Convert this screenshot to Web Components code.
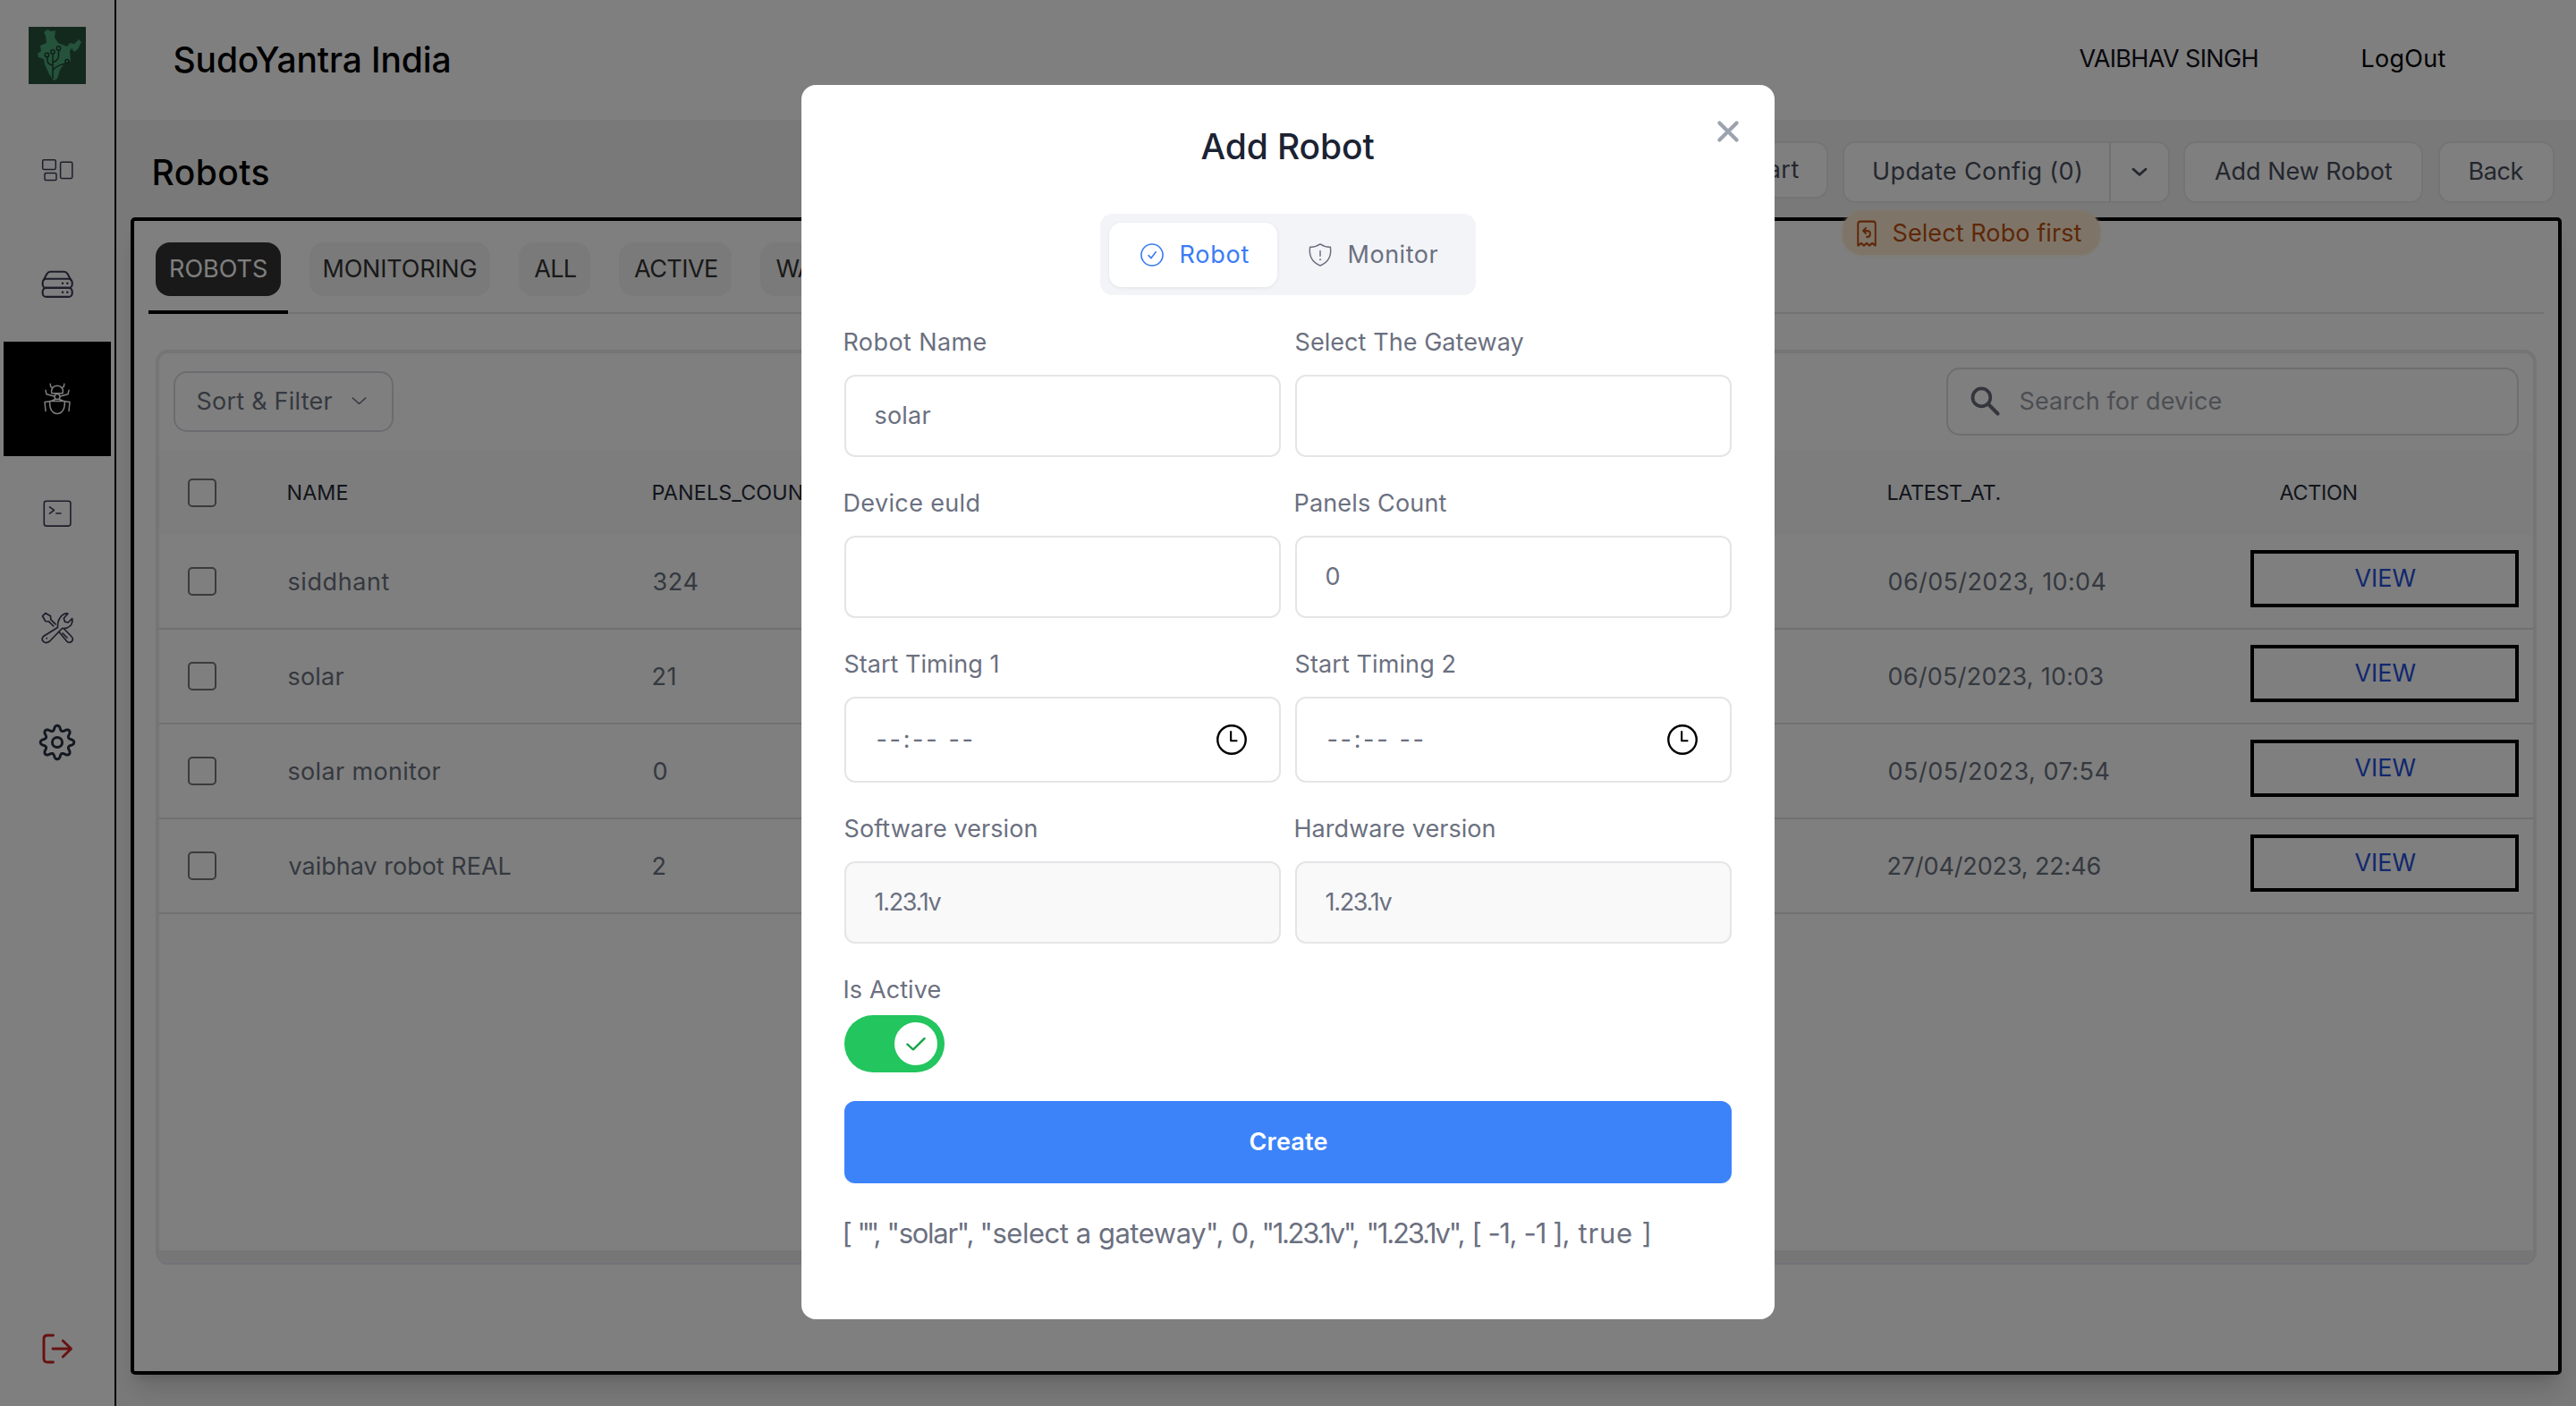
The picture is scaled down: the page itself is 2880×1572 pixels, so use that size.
<!DOCTYPE html>
<html lang="en">
<head>
<meta charset="utf-8">
<title>SudoYantra India</title>
<style>
html,body{margin:0;padding:0;height:100%;overflow:hidden}
body{font-family:Inter,"Liberation Sans",sans-serif;background:#f3f3f3;color:#6b7280}
</style>
</head>
<body>
<robot-console></robot-console>
<script>
const define=(name,html,setup)=>customElements.define(name,class extends HTMLElement{
  connectedCallback(){
    if(this.shadowRoot)return;
    const root=this.attachShadow({mode:'open'});
    root.innerHTML='<style>*{box-sizing:border-box}</style>'+(typeof html==='function'?html(this):html);
    if(setup)setup(this,root);
  }
});

/* Text set to a given ink width: s = font size, w = width, wt = weight */
const ctx=document.createElement('canvas').getContext('2d');
define('fit-text',el=>{
  const s=+(el.getAttribute('s')||27),w=+el.getAttribute('w'),wt=el.getAttribute('wt')||400,t=el.textContent;
  ctx.font=`${wt} ${s}px Inter`;
  const m=ctx.measureText(t),ink=m.actualBoundingBoxLeft+m.actualBoundingBoxRight;
  const ls=t.length>1?(w-ink)/(t.length-1):0,lh=Math.ceil(s*1.25);
  return `<style>:host{display:block;flex:none;width:${w}px;height:${lh}px;line-height:${lh}px;font-size:${s}px;font-weight:${wt};white-space:pre}
  span{display:inline-block;margin-left:${m.actualBoundingBoxLeft+.5}px;letter-spacing:${ls}px}</style><span><slot></slot></span>`;
});

/* Line icons on a 40 unit grid */
const gear=(()=>{let d='';for(let i=0;i<=160;i++){const a=i/160*2*Math.PI,c=Math.cos(8*a),r=15.4+2.5*Math.sign(c)*Math.pow(Math.abs(c),.75);d+=(i?'L':'M')+(20+r*Math.sin(a)).toFixed(2)+' '+(20-r*Math.cos(a)).toFixed(2)}return d+'Z'})();
const icons={
  grid:'<g stroke-width="1.5"><rect x="3.7" y="8.8" width="14.6" height="10.6" rx="1.4"/><rect x="6" y="23.6" width="13" height="8" rx="1.4"/><rect x="23.6" y="11.2" width="13.2" height="18.3" rx="1.4"/></g>',
  server:'<g stroke-width="2.1"><path d="M4.5 15.5L8.4 8.2Q9.8 5.8 12.5 5.8H27.5Q30.2 5.8 31.6 8.2L35.5 15.5"/><rect x="3.7" y="13.8" width="33" height="10.1" rx="4"/><rect x="3.7" y="23.9" width="33" height="10" rx="4"/></g><g fill="currentColor" stroke="none"><circle cx="26" cy="18.8" r="1.3"/><circle cx="31.3" cy="18.8" r="1.3"/><circle cx="26" cy="28.8" r="1.3"/><circle cx="31.3" cy="28.8" r="1.3"/></g>',
  bug:'<g stroke-width="1.5"><path d="M14 13.8C12.5 9 15.5 5.3 20 5.3S27.5 9 26 13.8ZM12.2 3.3L12.7 6.3 15 7.7M27.8 3.3L27.3 6.3 25 7.7M7 10.3L8 14.8 16.5 17M33 10.3L32 14.8 23.5 17M17.5 20.5L13 22.5 6 23.5 7 33.5M22.5 20.5L27 22.5 34 23.5 33 33.5M11.8 22.5H28.2C29 31 25.5 36.5 20 36.5S11 31 11.8 22.5Z"/><circle cx="20" cy="17.6" r="3"/></g>',
  term:'<g stroke-width="1.6"><rect x="5.3" y="6.3" width="29.6" height="27.8" rx="2.5"/><path d="M11.5 12.8L16.5 16.4 11.5 20.2M18.8 20H24"/></g>',
  tools:'<g stroke-width="1.7"><path d="M20.5 19.5C20 11.5 24.5 3.5 32 4L27.3 9.3 28.5 13.2 32.2 14 36.7 9.5C38 16.5 32.5 21.5 25.5 20.5L11.5 35C6 39 1 34 4.5 29.5Z"/><path d="M18 15.8L12.8 10.6 12.5 6.8 6.8 3.5 3.5 6.8 6.8 12.5 10.6 12.8 15.8 18M22 24.5L30.5 34.8C34.5 39 40 33.5 35.8 29.5L28 21.5M26 26L31 31"/></g><circle cx="8.3" cy="31.7" r=".9" fill="currentColor" stroke="none"/>',
  gear:`<path stroke-width="2.8" d="${gear}"/><circle cx="20" cy="20" r="5.3" stroke-width="2.8"/>`,
  exit:'<path stroke-width="2.9" d="M15.5 5H9Q5 5 5 9V31Q5 35 9 35H15.5M15 20H35.5M26.3 11L35.5 20 26.3 29"/>',
  down:'<path d="M6 12L20 27 34 12"/>',
  wide:'<path d="M3 4L20 33 37 4"/>',
  cross:'<path d="M4 4L36 36M36 4L4 36"/>',
  check:'<path d="M4 21L15 33 36 8"/>',
  search:'<circle cx="15" cy="15" r="12" stroke-width="4.5"/><path stroke-width="5" d="M24 24L37 37"/>',
  clock:'<circle cx="20" cy="20" r="18.5" stroke-width="2.8"/><path stroke-width="2.5" stroke-linecap="butt" d="M19 8.5V21.5H27.5"/>',
  okring:'<circle cx="20" cy="20" r="18.5" stroke-width="2.5"/><path stroke-width="2.5" d="M14 21L18.5 25.5 26.5 15"/>',
  shield:'<path stroke-width="2.3" d="M20 1.5Q28 7 37.5 6.5Q41 30 20 38.5Q-1 30 2.5 6.5Q12 7 20 1.5ZM20 13V22"/><circle cx="20" cy="28" r="1" fill="currentColor" stroke-width="1"/>',
  receipt:'<path stroke-width="3" d="M5 38V6Q5 2 9 2H31Q35 2 35 6V38L29.500 34.500 24.800 38 20 34.500 15.200 38 10.500 34.500ZM18.500 12L14 16 18.500 20M14 16H21Q26 16 26 20.500T21 25H20"/>'
};
define('line-icon',el=>`<style>:host{display:block;flex:none;width:${el.getAttribute('w')||40}px;height:${el.getAttribute('h')||el.getAttribute('w')||40}px}svg{display:block;width:100%;height:100%;overflow:visible}</style>
<svg viewBox="0 0 40 40" preserveAspectRatio="none" fill="none" stroke="currentColor" stroke-width="${el.getAttribute('sw')||2}" stroke-linecap="round" stroke-linejoin="round">${icons[el.getAttribute('n')]}</svg>`);

define('side-bar',`<style>
:host{display:flex;flex-direction:column;flex:none;width:130px;height:1572px;background:#fff;border-right:2px solid #000;color:#3b3c55;align-items:center}
.logo{width:64px;height:64px;margin:30px 0 32px;display:block}
.c{width:120px;height:128px;display:flex;align-items:center;justify-content:center}
.on{background:#000;color:#fff}.g{color:#283040}.x{margin-top:auto;color:#d02323}
</style>
<svg class="logo" viewBox="0 0 64 64"><path fill="#28523c" d="M0 0H64V64H0Z"/><path fill="#4aa574" d="M21 3L25 5 30 4 29 12 33 18 43 22 46 18 51 19 56 14 59 17 55 25 51 28 48 24 46 27 47 38 40 41 35 48 32 58 28 60 23 53 18 42 17 36 11 34 10 30 14 27 13 21 20 18 19 10 17 6Z"/><g fill="none" stroke="#1d3f31" stroke-width="1.5"><path d="M27 58V30M21 34V37Q21 42 27 43M33.5 26.5V33Q33.5 37 27 40M27 49Q29 44 41 41"/><circle cx="27" cy="28" r="2.2"/><circle cx="33.5" cy="24" r="2.2"/><circle cx="20.5" cy="31.5" r="2.2"/><circle cx="43" cy="38.5" r="2"/></g></svg>
<div class="c"><line-icon n="grid"></line-icon></div>
<div class="c"><line-icon n="server"></line-icon></div>
<div class="c on"><line-icon n="bug"></line-icon></div>
<div class="c"><line-icon n="term"></line-icon></div>
<div class="c"><line-icon n="tools"></line-icon></div>
<div class="c g"><line-icon n="gear" w="42"></line-icon></div>
<div class="c x"><line-icon n="exit"></line-icon></div>`);

define('top-bar',`<style>
:host{display:flex;height:134px;background:#fff;color:#000;align-items:center;padding:0 146px 2px 65px}
.n{margin-left:auto;margin-right:118px;color:#111019}
</style><fit-text s="39" w="307" wt="500">SudoYantra India</fit-text><fit-text class="n" w="199">VAIBHAV SINGH</fit-text><fit-text w="93">LogOut</fit-text>`);

define('action-bar',`<style>
:host{display:flex;height:109px;align-items:flex-start;padding:24px 24px 0 42px;color:#484e5c}
.h{color:#000;margin:10px auto 0 0}
.b{display:flex;height:69px;border:2px solid #e9e9ec;border-radius:14px;background:#fff;align-items:center;justify-content:center;flex:none;padding-bottom:1px}
.r{height:64px;width:158px;margin-right:16px}
.u{width:366px;margin-right:15px;position:relative}
.u .t{width:298px;display:flex;justify-content:center;align-items:center;height:65px;border-right:2px solid #e2e2e6}
.u .d{flex:1;display:flex;justify-content:center}
.badge{position:absolute;left:-2px;top:76px;width:288px;height:49px;border-radius:22px;background:#fdebd0;color:#bd4f12;display:flex;align-items:center;gap:16px;padding:0 0 0 14px;box-shadow:0 0 4px #fdebd0}
</style>
<fit-text class="h" s="39" w="128" wt="500">Robots</fit-text>
<div class="b r"><fit-text w="92">Restart</fit-text></div>
<div class="b u"><div class="t"><fit-text w="231">Update Config (0)</fit-text></div><div class="d"><line-icon n="down" w="20" h="17" sw="6"></line-icon></div>
<div class="badge"><line-icon n="receipt" w="26" h="30"></line-icon><fit-text w="211">Select Robo first</fit-text></div></div>
<div class="b" style="width:268px;margin-right:17px"><fit-text w="199">Add New Robot</fit-text></div>
<div class="b" style="width:130px"><fit-text w="60">Back</fit-text></div>`);

define('tab-strip',`<style>
:host{display:flex;height:104px;margin:0 16px;border-bottom:2px solid #e6e6e8;gap:16px;padding-top:24px}
.t{padding:0 8px;height:80px;flex:none}
.p{height:60px;border-radius:16px;background:#f5f5f5;color:#333;display:flex;align-items:center;justify-content:center}
.on{border-bottom:4px solid #000}.on .p{background:#323232;color:#fff}
</style>
<div class="t on"><div class="p" style="width:140px"><fit-text w="107">ROBOTS</fit-text></div></div>
<div class="t"><div class="p" style="width:202px"><fit-text w="170">MONITORING</fit-text></div></div>
<div class="t"><div class="p" style="width:80px"><fit-text w="46.5">ALL</fit-text></div></div>
<div class="t"><div class="p" style="width:126px"><fit-text w="93">ACTIVE</fit-text></div></div>
<div class="t"><div class="p" style="width:156px"><fit-text w="122">WARNING</fit-text></div></div>`);

define('table-tools',`<style>
:host{display:flex;height:109px;align-items:center;justify-content:space-between;padding:0 16px 2px}
.s{width:246px;height:68px;border:2px solid #d9d9e0;border-radius:15px;display:flex;align-items:center;padding-left:24px;gap:22px}
.q{width:640px;height:76px;border:2px solid #dcdce0;border-radius:15px;display:flex;align-items:center;padding-left:25px;gap:22px;color:#999ca6}
.q line-icon{color:#6a6c7a}
</style>
<div class="s"><fit-text w="151">Sort &amp; Filter</fit-text><line-icon n="wide" w="17" h="9" sw="4.5"></line-icon></div>
<div class="q"><line-icon n="search" w="33" h="33"></line-icon><fit-text w="225">Search for device</fit-text></div>`);

define('robot-row',el=>{
  const c=(k)=>el.getAttribute(k).split('|'),f=(k,s)=>{const [t,w]=c(k);return `<fit-text class="x" s="${s}" w="${w}">${t}</fit-text>`};
  const head=el.hasAttribute('head'),s=head?23.3:27;
  return `<style>
:host{display:grid;grid-template-columns:112px 408px 1381px 405px 1fr;align-items:center;height:${head?94:106}px;padding-left:32px;${head?'background:#fafafa;color:#252b38':'border-bottom:2px solid #e3e3e8'}}
i{width:32px;height:32px;border:2px solid #767676;border-radius:5px;background:#fff}
.v{width:300px;height:64px;border:4px solid #000;display:flex;align-items:center;justify-content:center;color:#2450dd;margin-top:-6px;padding-bottom:1px}
.x{margin-top:${head?0:2}px}
.a{padding-left:32px}
</style><i></i>${f('name',s)}${f('panels',s)}${f('at',s)}${head?'<div class="a"><fit-text s="23.3" w="86">ACTION</fit-text></div>':'<div class="v"><fit-text w="68">VIEW</fit-text></div>'}`});

define('robots-panel',`<style>
:host{display:block;margin:0 16px;height:1294px;border:4px solid #000;border-radius:5px;background:#fff;box-shadow:0 20px 25px -5px #0002,0 8px 10px -6px #0002}
.card{margin:40px 24px 0;height:1023px;border:4px solid #eaeaee;border-bottom:2px solid #e4e4f2;border-radius:14px;display:flex;flex-direction:column;overflow:hidden}
.foot{margin-top:auto;height:14px;background:#ededed;flex:none}
</style><tab-strip></tab-strip><div class="card"><table-tools></table-tools>
<robot-row head name="NAME|66" panels="PANELS_COUNT|182" at="LATEST_AT.|124"></robot-row>
<robot-row name="siddhant|113" panels="324|49" at="06/05/2023, 10:04|242"></robot-row>
<robot-row name="solar|62" panels="21|24" at="06/05/2023, 10:03|240"></robot-row>
<robot-row name="solar monitor|170" panels="0|18" at="05/05/2023, 07:54|246"></robot-row>
<robot-row name="vaibhav robot REAL|248" panels="2|15" at="27/04/2023, 22:46|237"></robot-row>
<div class="foot"></div></div>`);

define('form-field',el=>{
  const [l,w]=el.getAttribute('label').split('|');
  return `<style>
:host{display:block;width:488px}
.l{height:40px;display:flex;align-items:center;margin-bottom:17px;padding-top:2px}
.b{height:${el.hasAttribute('time')?96:92}px;border:2px solid #e5e5e8;border-radius:12px;display:flex;align-items:center;justify-content:space-between;padding:0 36px 0 ${el.hasAttribute('time')?34:32}px;background:${el.hasAttribute('off')?'#f9f9fa':'#fff'}}
</style><div class="l"><fit-text w="${w}">${l}</fit-text></div><div class="b"><slot></slot></div>`});

define('tab-switch',`<style>
:host{display:flex;width:420px;height:91px;border-radius:14px;background:#f3f4f8;align-items:center;padding-left:10px}
div{display:flex;align-items:center;gap:19px}
.on{width:188px;height:72px;border-radius:14px;background:#fff;color:#3b7cf5;padding-left:35px;box-shadow:0 1px 4px #0001;margin-right:35px}
</style><div class="on"><line-icon n="okring" w="26"></line-icon><fit-text w="76">Robot</fit-text></div><div><line-icon n="shield" w="26"></line-icon><fit-text w="99">Monitor</fit-text></div>`);

define('toggle-switch',`<style>
:host{display:flex;width:112px;height:64px;border-radius:32px;background:#22c55e;align-items:center;justify-content:flex-end;padding-right:8px;box-sizing:border-box}
div{width:48px;height:48px;border-radius:50%;background:#fff;display:flex;align-items:center;justify-content:center;color:#16a34a}
</style><div><line-icon n="check" w="24" h="20" sw="4.2"></line-icon></div>`);

/* Dump of the form state, one run per value */
const state=[['[',6,11],['"",',22,11],['"solar",',93,11],['"select a gateway",',268,11],['0,',25,11],['"1.23.1v",',105,12],['"1.23.1v",',106,12],['[',6,11],['-1,',29,11],['-1 ],',48,11],['true ]',79,0]];
define('form-dump',`<style>:host{display:flex;height:47px;align-items:center}</style>`+state.map(([t,w,g])=>`<fit-text s="31" w="${w}" style="margin-right:${g}px">${t}</fit-text>`).join(''));

define('add-robot-dialog',`<style>
:host{position:absolute;inset:0;background:rgba(0,0,0,.5);display:flex;justify-content:center;align-items:flex-start;padding-top:95px}
.m{width:1088px;height:1380px;border-radius:16px;background:#fff;padding:0 48px;position:relative;color:#6b7080}
.t{height:137px;display:flex;align-items:center;justify-content:center;color:#1b2333;margin-bottom:7px;padding-right:2px}
tab-switch{margin:0 auto 32px}
.g{display:grid;grid-template-columns:488px 488px;gap:31px 16px}
.a{height:40px;display:flex;align-items:center;margin:31px 0 9px;padding-top:2px}
.c{height:92px;border-radius:12px;background:#3c83fa;color:#fff;display:flex;align-items:center;justify-content:center;margin:32px 0}
.x{position:absolute;right:40px;top:40px;color:#9ca3af}
.k{color:#000}
</style><div class="m">
<line-icon class="x" n="cross" w="24" sw="7"></line-icon>
<div class="t"><fit-text s="39" w="194" wt="500">Add Robot</fit-text></div>
<tab-switch></tab-switch>
<div class="g">
<form-field label="Robot Name|158"><fit-text w="62">solar</fit-text></form-field>
<form-field label="Select The Gateway|255"></form-field>
<form-field label="Device euld|150"></form-field>
<form-field label="Panels Count|169"><fit-text w="18">0</fit-text></form-field>
<form-field time label="Start Timing 1|171"><fit-text w="106">--:-- --</fit-text><line-icon class="k" n="clock" w="34"></line-icon></form-field>
<form-field time label="Start Timing 2|178"><fit-text w="106">--:-- --</fit-text><line-icon class="k" n="clock" w="34"></line-icon></form-field>
<form-field off label="Software version|214"><fit-text w="74">1.23.1v</fit-text></form-field>
<form-field off label="Hardware version|222"><fit-text w="74">1.23.1v</fit-text></form-field>
</div>
<div class="a"><fit-text w="107">Is Active</fit-text></div>
<toggle-switch></toggle-switch>
<div class="c"><fit-text w="86" wt="600">Create</fit-text></div>
<form-dump></form-dump>
</div>`);

define('robot-console',`<style>
:host{display:flex;width:2880px;height:1572px;position:relative;background:#f3f3f3;overflow:hidden}
main{flex:1;min-width:0}
</style><side-bar></side-bar><main><top-bar></top-bar><action-bar></action-bar><robots-panel></robots-panel></main><add-robot-dialog></add-robot-dialog>`);
</script>
</body>
</html>
